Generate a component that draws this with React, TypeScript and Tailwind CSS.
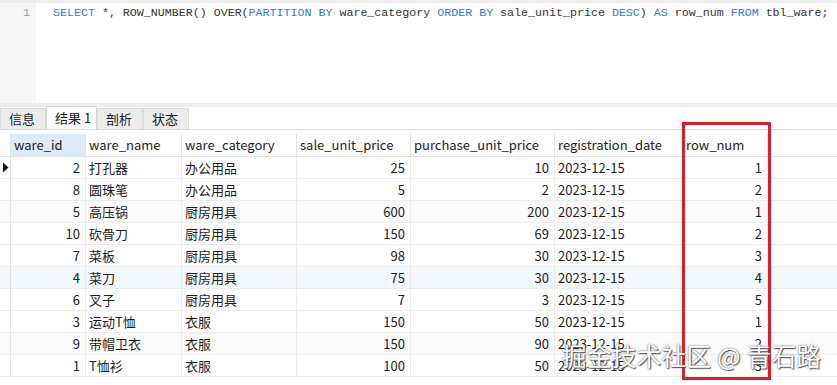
import React from 'react'

const kw = 'text-[#2f7bd6]'

const cols = [
  { key: 'ware_id', w: 'w-[75px]', right: true },
  { key: 'ware_name', w: 'w-[96px]', right: false },
  { key: 'ware_category', w: 'w-[115px]', right: false },
  { key: 'sale_unit_price', w: 'w-[114px]', right: true },
  { key: 'purchase_unit_price', w: 'w-[144px]', right: true },
  { key: 'registration_date', w: 'w-[128px]', right: false },
  { key: 'row_num', w: 'w-[85px]', right: true },
]

const rows = [
  ['2', '打孔器', '办公用品', '25', '10', '2023-12-15', '1'],
  ['8', '圆珠笔', '办公用品', '5', '2', '2023-12-15', '2'],
  ['5', '高压锅', '厨房用具', '600', '200', '2023-12-15', '1'],
  ['10', '砍骨刀', '厨房用具', '150', '69', '2023-12-15', '2'],
  ['7', '菜板', '厨房用具', '98', '30', '2023-12-15', '3'],
  ['4', '菜刀', '厨房用具', '75', '30', '2023-12-15', '4'],
  ['6', '叉子', '厨房用具', '7', '3', '2023-12-15', '5'],
  ['3', '运动T恤', '衣服', '150', '50', '2023-12-15', '1'],
  ['9', '带帽卫衣', '衣服', '150', '90', '2023-12-15', '2'],
  ['1', 'T恤衫', '衣服', '100', '50', '2023-12-15', '3'],
]

const tabs = ['信息', '结果 1', '剖析', '状态']

function App() {
  return (
    <div className="relative w-[837px] h-[385px] overflow-hidden bg-white text-[#1c1c1c] font-['Noto_Sans_CJK_SC',sans-serif]">
      {/* editor */}
      <div className="h-[3px] bg-[#eeeeee]" />
      <div className="flex h-[100px]">
        <div className="w-[36px] shrink-0 bg-[#f6f6f6] text-right pr-[6px] pt-[2px] font-['Liberation_Mono',monospace] text-[11.65px] text-[#999] leading-[16px]">
          1
        </div>
        <div className="pl-[17px] pt-[2px] font-['Liberation_Mono',monospace] text-[11.65px] leading-[16px] text-[#333] whitespace-pre">
          <span className={kw}>SELECT</span> *, ROW_NUMBER() OVER(<span className={kw}>PARTITION BY</span> ware_category <span className={kw}>ORDER BY</span> sale_unit_price <span className={kw}>DESC</span>) <span className={kw}>AS</span> row_num <span className={kw}>FROM</span> tbl_ware;
        </div>
      </div>
      <div className="h-[4px] bg-[#eeeeee]" />

      {/* tabs */}
      <div className="flex h-[23px] items-end border-b border-[#d9d9d9]">
        {tabs.map((t, i) => (
          <div
            key={t}
            className={
              i === 1
                ? 'h-[23px] w-[51px] bg-white border border-b-0 border-[#d4d4d4] text-[13px] flex items-center pl-[8px]'
                : 'h-[21px] w-[46px] bg-[#ececec] border border-b-0 border-[#dcdcdc] text-[13px] flex items-center pl-[8px]'
            }
          >
            {t}
          </div>
        ))}
      </div>

      {/* grid */}
      <div className="pt-[4px] text-[13px]">
        <div className="flex h-[23px] border-b border-[#e3e3e3]">
          <div className="w-[11px] border-r border-[#e3e3e3]" />
          {cols.map((c, i) => (
            <div
              key={c.key}
              className={`${c.w} h-full border-r border-[#e3e3e3] flex items-center pl-[3px] text-[#222] ${i === 0 ? 'bg-[#dcebf8]' : ''}`}
            >
              {c.key}
            </div>
          ))}
        </div>
        {rows.map((r, ri) => (
          <div
            key={ri}
            className={`flex h-[22px] border-b border-[#ececec] ${ri === 5 ? 'bg-[#f3f8fd]' : ri % 3 === 2 ? 'bg-[#fafafa]' : ''}`}
          >
            <div className="w-[11px] border-r border-[#e3e3e3] flex items-center justify-center">
              {ri === 0 && (
                <svg width="7" height="11" viewBox="0 0 7 11">
                  <path d="M1 0.5 L6.5 5.5 L1 10.5 Z" fill="#111" />
                </svg>
              )}
            </div>
            {r.map((v, ci) => (
              <div
                key={ci}
                className={`${cols[ci].w} h-full border-r border-[#ececec] flex items-center px-[3px] ${cols[ci].right ? 'justify-end pr-[5px]' : ''}`}
              >
                {v}
              </div>
            ))}
          </div>
        ))}
      </div>

      {/* red highlight */}
      <div className="absolute left-[682px] top-[122px] w-[89px] h-[258px] border-[3.5px] border-[#d7202e]" />

      {/* watermark */}
      <div className="absolute left-[562px] top-[338px] text-[24.5px] tracking-[0.4px] leading-[36px] text-white font-['Noto_Sans_CJK_SC',sans-serif] [text-shadow:0_0_2px_#555,1px_1px_1px_#555]">
        掘金技术社区 @ 青石路
      </div>
    </div>
  )
}

export default App
